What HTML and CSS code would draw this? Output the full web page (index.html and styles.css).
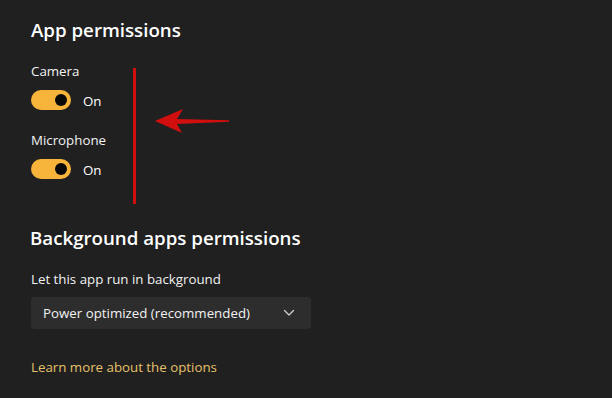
FILE: index.html
```html
<!DOCTYPE html>
<html lang="en">

<head>
  <meta charset="UTF-8">
  <meta name="viewport" content="width=device-width, initial-scale=1.0">
  <title>App permissions</title>
  <link rel="stylesheet" href="styles.css">
</head>

<body>

  <div class="page">

    <p class="title">App permissions</p>

    <div class="perm">
      <p class="label">Camera</p>
      <div class="toggle-row">
        <span class="toggle"><span class="knob"></span></span>
        <span class="state">On</span>
      </div>
    </div>

    <div class="perm">
      <p class="label">Microphone</p>
      <div class="toggle-row">
        <span class="toggle"><span class="knob"></span></span>
        <span class="state">On</span>
      </div>
    </div>

    <p class="title title-bg">Background apps permissions</p>

    <p class="label">Let this app run in background</p>

    <div class="dropdown">
      <span>Power optimized (recommended)</span>
      <svg class="chevron" width="12" height="8" viewBox="0 0 12 8">
        <path d="M1.5 1.5 L6 6 L10.5 1.5" fill="none" stroke="#d0d0d0" stroke-width="1.3" stroke-linecap="round" stroke-linejoin="round"/>
      </svg>
    </div>

    <a class="learn" href="#">Learn more about the options</a>

    <!-- red annotation -->
    <svg class="mark" width="120" height="150" viewBox="0 0 120 150">
      <rect x="0" y="0" width="3" height="136" fill="#d10f0f"/>
      <path d="M22 53 L50 41 L44 51 L96 52.2 L96 53.8 L44 56 L49 65 Z" fill="#d10f0f"/>
    </svg>

  </div>

</body>

</html>
```

FILE: styles.css
```css
body {
  margin: 0;
  background-color: #202020;
  color: #ffffff;
  font-family: "Open Sans", "Noto Sans", sans-serif;
}

p {
  margin: 0;
}

.page {
  position: relative;
  display: flex;
  flex-direction: column;
  align-items: flex-start;
  padding: 16px 0 0 31px;
  height: 382px;
}

.title {
  font-size: 18.7px;
  font-weight: 600;
  line-height: 28px;
}

.title-bg {
  margin-top: 45px;
  margin-left: -1px;
}

.label {
  font-size: 13.3px;
  line-height: 20px;
  color: #f2f2f2;
}

.perm {
  display: flex;
  flex-direction: column;
  gap: 9px;
  margin-top: 17px;
}

.perm + .perm {
  margin-top: 20px;
}

.toggle-row {
  display: flex;
  align-items: center;
  gap: 12px;
  height: 20px;
}

.toggle {
  display: flex;
  align-items: center;
  justify-content: flex-end;
  width: 40px;
  height: 20px;
  border-radius: 10px;
  background-color: #f6b43a;
  box-sizing: border-box;
  padding-right: 4px;
}

.knob {
  width: 12px;
  height: 12px;
  border-radius: 50%;
  background-color: #0a0a0a;
}

.state {
  font-size: 13.3px;
  line-height: 20px;
  padding-top: 2px;
}

.title-bg + .label {
  margin-top: 17px;
}

.dropdown {
  display: flex;
  align-items: center;
  justify-content: space-between;
  width: 280px;
  height: 32px;
  margin-top: 8px;
  padding: 0 12px;
  box-sizing: border-box;
  background-color: #2d2d2d;
  border-radius: 4px;
  font-size: 13.3px;
  color: #f2f2f2;
}

.chevron {
  margin-right: 4px;
}

.learn {
  margin-top: 28px;
  font-size: 13.3px;
  line-height: 20px;
  color: #e6c06a;
  text-decoration: none;
}

.mark {
  position: absolute;
  left: 133px;
  top: 68px;
}
```
